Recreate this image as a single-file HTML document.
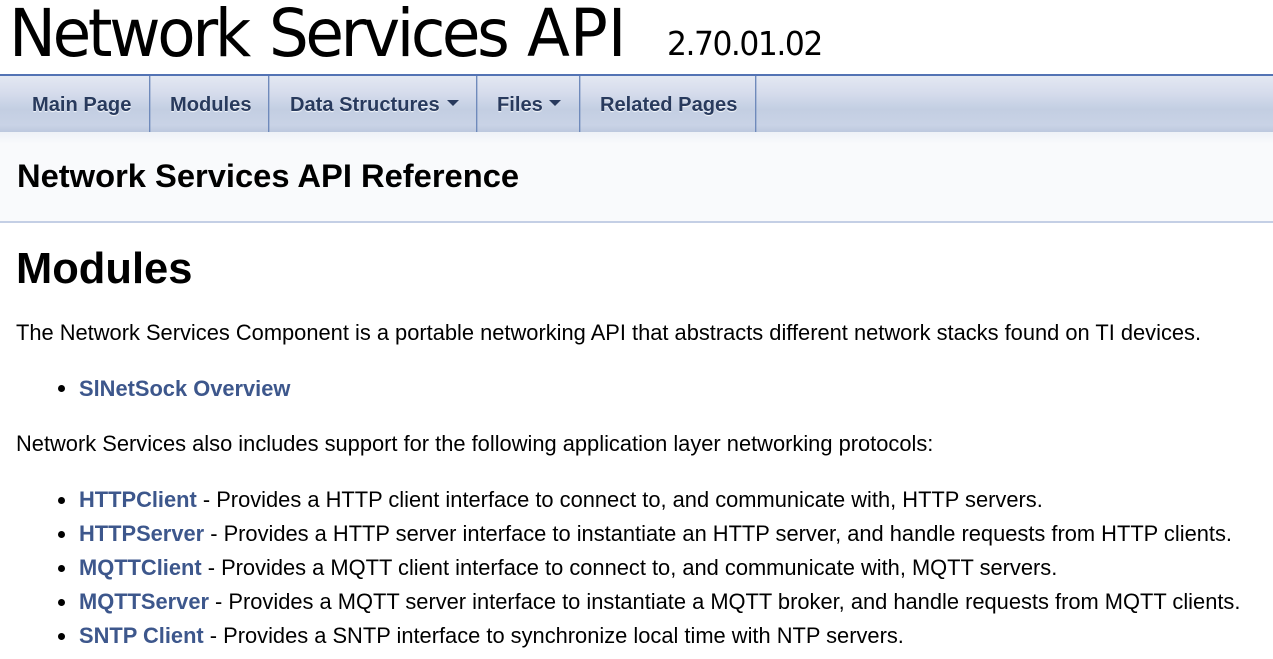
<!DOCTYPE html>
<html><head><meta charset="utf-8"><style>
html,body{margin:0;padding:0;background:#fff;width:1273px;height:659px;overflow:hidden;font-family:"Liberation Sans",Arial,sans-serif;color:#000}
.t{position:absolute;white-space:nowrap;line-height:1}
.w{top:1px;font-family:"DejaVu Sans",sans-serif;font-size:66px;transform-origin:0 0;transform:scaleX(.95)}
.nav{position:absolute;left:0;top:74px;width:1273px;height:58px;box-sizing:border-box;border-top:2px solid #5373b4;background:linear-gradient(to bottom,#e3e8f2 0,#d6dcec 30%,#c9d3e6 50%,#c3cee2 60%,#c9d3e6 88%,#bcc8de 100%)}
.sep{position:absolute;top:76px;height:56px;width:1px;background:#6f8abb;box-shadow:1px 0 0 rgba(126,151,196,.45)}
.n{font-size:20.1px;font-weight:bold;color:#283a5d;text-shadow:0 1px 1px rgba(255,255,255,.9)}
.head{position:absolute;left:0;top:132px;width:1273px;height:91px;box-sizing:border-box;background:linear-gradient(to bottom,#eef1f7 0,#f9fafc 12px);border-bottom:2px solid #c4cfe5}
.tri{position:absolute;top:100px;width:0;height:0;border-left:6px solid transparent;border-right:6px solid transparent;border-top:6px solid #283a5d}
a{color:#3d578c;font-weight:bold;text-decoration:none}
.p{font-size:21.86px}
.b{position:absolute;left:58px;width:7px;height:7px;border-radius:50%;background:#000}
</style></head><body>
<div class="t w" style="left:8.5px;letter-spacing:-3.45px">Network</div>
<div class="t w" style="left:268.5px;letter-spacing:-3.55px">Services</div>
<div class="t w" style="left:526.5px;letter-spacing:.1px">API</div>
<div class="t" style="left:667px;top:27px;font-family:'DejaVu Sans',sans-serif;font-size:33px;letter-spacing:-1.55px;transform-origin:0 0;transform:scaleX(.95)">2.70.01.02</div>
<div class="nav"></div>
<div class="sep" style="left:149px"></div>
<div class="sep" style="left:268px"></div>
<div class="sep" style="left:476px"></div>
<div class="sep" style="left:579px"></div>
<div class="sep" style="left:755px"></div>
<div class="t n" style="left:32px;top:95px">Main Page</div>
<div class="t n" style="left:170px;top:95px">Modules</div>
<div class="t n" style="left:290px;top:95px">Data Structures</div>
<div class="tri" style="left:447px"></div>
<div class="t n" style="left:497px;top:95px">Files</div>
<div class="tri" style="left:549px"></div>
<div class="t n" style="left:600px;top:95px">Related Pages</div>
<div class="head"></div>
<div class="t" style="left:17px;top:160px;font-size:32.7px;font-weight:bold">Network Services API Reference</div>
<div class="t" style="left:16px;top:248px;font-size:43.5px;font-weight:bold">Modules</div>
<div class="t p" style="left:16px;top:322px">The Network Services Component is a portable networking API that abstracts different network stacks found on TI devices.</div>
<div class="b" style="top:385px"></div>
<div class="t p" style="left:79px;top:378px"><a>SlNetSock Overview</a></div>
<div class="t p" style="left:16px;top:433px">Network Services also includes support for the following application layer networking protocols:</div>
<div class="b" style="top:497px"></div>
<div class="t p" style="left:79px;top:489px"><a>HTTPClient</a> - Provides a HTTP client interface to connect to, and communicate with, HTTP servers.</div>
<div class="b" style="top:531px"></div>
<div class="t p" style="left:79px;top:523px"><a>HTTPServer</a> - Provides a HTTP server interface to instantiate an HTTP server, and handle requests from HTTP clients.</div>
<div class="b" style="top:565px"></div>
<div class="t p" style="left:79px;top:557px"><a>MQTTClient</a> - Provides a MQTT client interface to connect to, and communicate with, MQTT servers.</div>
<div class="b" style="top:599px"></div>
<div class="t p" style="left:79px;top:591px"><a>MQTTServer</a> - Provides a MQTT server interface to instantiate a MQTT broker, and handle requests from MQTT clients.</div>
<div class="b" style="top:633px"></div>
<div class="t p" style="left:79px;top:625px"><a>SNTP Client</a> - Provides a SNTP interface to synchronize local time with NTP servers.</div>
</body></html>
